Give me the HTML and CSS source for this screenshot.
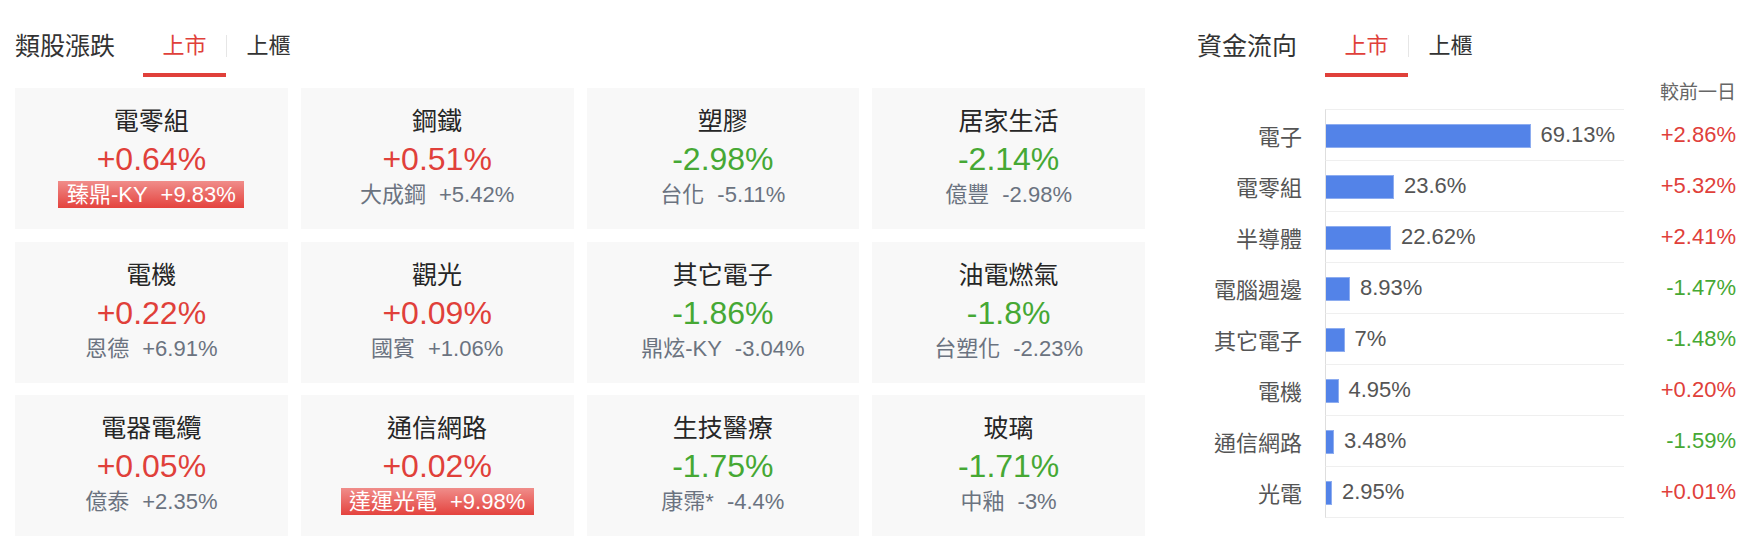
FILE: index.html
```html
<!DOCTYPE html>
<html lang="zh-Hant">
<head>
<meta charset="utf-8">
<title>類股漲跌 · 資金流向</title>
<link rel="stylesheet" href="styles.css">
</head>
<body>
<main class="page">
  <section class="sector">
    <header class="head">
      <h2 class="head-title">類股漲跌</h2>
      <nav class="tabs">
        <span class="tab active">上市</span>
        <span class="tab-sep"></span>
        <span class="tab">上櫃</span>
      </nav>
    </header>
    <div class="grid">
      <div class="card">
        <div class="card-name">電零組</div>
        <div class="card-pct up">+0.64%</div>
        <div class="lead"><span class="badge">臻鼎-KY<span class="lead-chg">+9.83%</span></span></div>
      </div>
      <div class="card">
        <div class="card-name">鋼鐵</div>
        <div class="card-pct up">+0.51%</div>
        <div class="lead">大成鋼<span class="lead-chg">+5.42%</span></div>
      </div>
      <div class="card">
        <div class="card-name">塑膠</div>
        <div class="card-pct down">-2.98%</div>
        <div class="lead">台化<span class="lead-chg">-5.11%</span></div>
      </div>
      <div class="card">
        <div class="card-name">居家生活</div>
        <div class="card-pct down">-2.14%</div>
        <div class="lead">億豐<span class="lead-chg">-2.98%</span></div>
      </div>
      <div class="card">
        <div class="card-name">電機</div>
        <div class="card-pct up">+0.22%</div>
        <div class="lead">恩德<span class="lead-chg">+6.91%</span></div>
      </div>
      <div class="card">
        <div class="card-name">觀光</div>
        <div class="card-pct up">+0.09%</div>
        <div class="lead">國賓<span class="lead-chg">+1.06%</span></div>
      </div>
      <div class="card">
        <div class="card-name">其它電子</div>
        <div class="card-pct down">-1.86%</div>
        <div class="lead">鼎炫-KY<span class="lead-chg">-3.04%</span></div>
      </div>
      <div class="card">
        <div class="card-name">油電燃氣</div>
        <div class="card-pct down">-1.8%</div>
        <div class="lead">台塑化<span class="lead-chg">-2.23%</span></div>
      </div>
      <div class="card">
        <div class="card-name">電器電纜</div>
        <div class="card-pct up">+0.05%</div>
        <div class="lead">億泰<span class="lead-chg">+2.35%</span></div>
      </div>
      <div class="card">
        <div class="card-name">通信網路</div>
        <div class="card-pct up">+0.02%</div>
        <div class="lead"><span class="badge">達運光電<span class="lead-chg">+9.98%</span></span></div>
      </div>
      <div class="card">
        <div class="card-name">生技醫療</div>
        <div class="card-pct down">-1.75%</div>
        <div class="lead">康霈*<span class="lead-chg">-4.4%</span></div>
      </div>
      <div class="card">
        <div class="card-name">玻璃</div>
        <div class="card-pct down">-1.71%</div>
        <div class="lead">中釉<span class="lead-chg">-3%</span></div>
      </div>
    </div>
  </section>

  <section class="flow">
    <header class="head">
      <h2 class="head-title">資金流向</h2>
      <nav class="tabs">
        <span class="tab active">上市</span>
        <span class="tab-sep"></span>
        <span class="tab">上櫃</span>
      </nav>
    </header>
    <div class="flow-note">較前一日</div>
    <div class="chart">
      <div class="row">
        <div class="row-label">電子</div>
        <div class="row-plot"><span class="bar" style="width:204.5px"></span><span class="bar-val">69.13%</span></div>
        <div class="row-chg up">+2.86%</div>
      </div>
      <div class="row">
        <div class="row-label">電零組</div>
        <div class="row-plot"><span class="bar" style="width:68px"></span><span class="bar-val">23.6%</span></div>
        <div class="row-chg up">+5.32%</div>
      </div>
      <div class="row">
        <div class="row-label">半導體</div>
        <div class="row-plot"><span class="bar" style="width:65px"></span><span class="bar-val">22.62%</span></div>
        <div class="row-chg up">+2.41%</div>
      </div>
      <div class="row">
        <div class="row-label">電腦週邊</div>
        <div class="row-plot"><span class="bar" style="width:24px"></span><span class="bar-val">8.93%</span></div>
        <div class="row-chg down">-1.47%</div>
      </div>
      <div class="row">
        <div class="row-label">其它電子</div>
        <div class="row-plot"><span class="bar" style="width:18.5px"></span><span class="bar-val">7%</span></div>
        <div class="row-chg down">-1.48%</div>
      </div>
      <div class="row">
        <div class="row-label">電機</div>
        <div class="row-plot"><span class="bar" style="width:12.5px"></span><span class="bar-val">4.95%</span></div>
        <div class="row-chg up">+0.20%</div>
      </div>
      <div class="row">
        <div class="row-label">通信網路</div>
        <div class="row-plot"><span class="bar" style="width:8px"></span><span class="bar-val">3.48%</span></div>
        <div class="row-chg down">-1.59%</div>
      </div>
      <div class="row row-last">
        <div class="row-label">光電</div>
        <div class="row-plot"><span class="bar" style="width:6px"></span><span class="bar-val">2.95%</span></div>
        <div class="row-chg up">+0.01%</div>
      </div>
    </div>
  </section>
</main>
</body>
</html>
```

FILE: styles.css
```css
* {
  box-sizing: border-box;
}

body {
  margin: 0;
  background: #fff;
  font-family: "Liberation Sans", "Noto Sans CJK TC", sans-serif;
  color: #333;
}

.page {
  display: flex;
  gap: 52px;
  padding-left: 15px;
}

.sector {
  width: 1130px;
}

.flow {
  width: 539px;
}

/* section header: title + market tabs */
.head {
  display: flex;
  align-items: flex-start;
  height: 77px;
  padding-top: 30px;
}

.head-title {
  margin: 0 28px 0 0;
  font-size: 25px;
  line-height: 32px;
  font-weight: normal;
  color: #333;
}

.tabs {
  display: flex;
  align-items: flex-start;
}

.tab {
  padding: 0 19.5px 11px;
  font-size: 22px;
  line-height: 32px;
  color: #333;
  border-bottom: 4px solid transparent;
}

.tab.active {
  color: #e0403a;
  border-bottom-color: #e0403a;
}

.tab-sep {
  width: 1px;
  height: 22px;
  margin-top: 5px;
  background: #e6e6e6;
}

.up {
  color: #e0403a;
}

.down {
  color: #46a834;
}

/* sector cards */
.grid {
  display: grid;
  grid-template-columns: repeat(4, 1fr);
  column-gap: 13px;
  row-gap: 12.5px;
  margin-top: 11px;
}

.card {
  height: 141px;
  padding: 17px 8px 0;
  background: #f8f8f8;
  text-align: center;
}

.card-name {
  font-size: 25px;
  line-height: 32px;
  color: #262626;
}

.card-pct {
  margin-top: 3px;
  font-size: 32px;
  line-height: 38px;
}

.lead {
  margin-top: 3px;
  font-size: 22px;
  line-height: 27px;
  color: #6b7380;
  white-space: nowrap;
}

.lead-chg {
  margin-left: 13px;
}

.badge {
  display: inline-block;
  padding: 0 8.5px;
  color: #fff;
  background: linear-gradient(to bottom, #f08d8a, #e4433e);
}

/* fund flow chart */
.flow-note {
  height: 24px;
  margin-top: 4px;
  font-size: 19px;
  line-height: 24px;
  text-align: right;
  color: #666;
}

.chart {
  margin-top: 4px;
}

.row {
  display: flex;
  height: 51px;
}

.row-last {
  height: 52px;
}

.row-label {
  width: 105px;
  display: flex;
  align-items: center;
  justify-content: flex-end;
  font-size: 22px;
  color: #555;
}

.row-plot {
  width: 299px;
  margin-left: 23px;
  display: flex;
  align-items: center;
  border-left: 1px solid #dedede;
  border-top: 1px solid #efefef;
}

.row-last .row-plot {
  border-bottom: 1px solid #efefef;
}

.bar {
  height: 24px;
  margin-top: 2px;
  background: #5383e8;
  border: 1px solid #8eadf0;
  border-left: 0;
}

.bar-val {
  margin-left: 10px;
  font-size: 22px;
  color: #555;
}

.row-chg {
  width: 112px;
  display: flex;
  align-items: center;
  justify-content: flex-end;
  font-size: 22px;
}
```
